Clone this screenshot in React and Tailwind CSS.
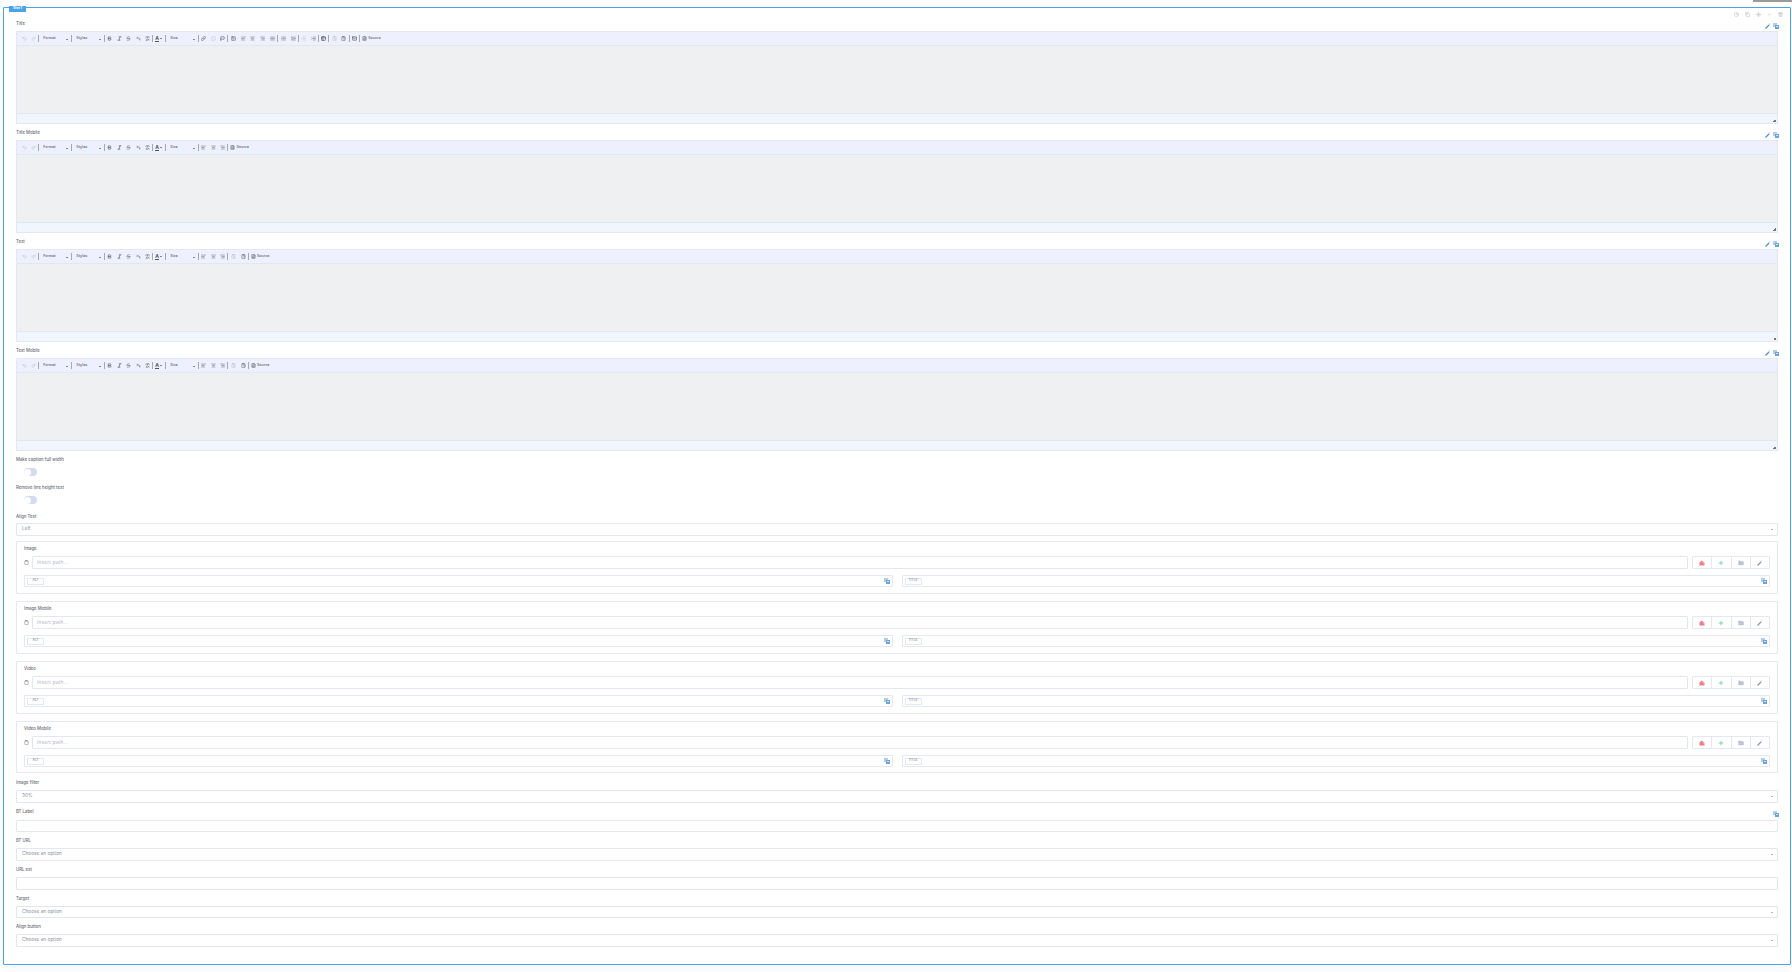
import React from 'react';
import {
  Undo2, Redo2, Bold, Italic, Strikethrough, Subscript, RemoveFormatting, Link, Unlink, Flag, Image,
  AlignLeft, AlignCenter, AlignRight, AlignJustify, List, ListOrdered, Outdent, Indent, Table2,
  ClipboardCopy, ClipboardPaste, Mail, FileText, Clipboard, Plus, Folder,
  Clock, Copy, Move, ChevronUp, Trash2,
} from 'lucide-react';

const Sep = () => <span className="w-px h-[7px] bg-[#a3a8b4] shrink-0" />;

const Btn = ({ icon: Icon, faded, heavy, wide }) => (
  <span className={`h-full flex items-center justify-center shrink-0 ${wide ? 'w-[9.8px]' : 'w-[9.4px]'}`}>
    <Icon size={5} strokeWidth={heavy ? 3.2 : 2.4} className={faded ? 'text-[#bcc0ca]' : 'text-[#5a5f6b]'} />
  </span>
);

const Combo = ({ label }) => (
  <span className="w-[32px] h-full flex items-start justify-between pl-[4px] pr-[3px] pt-[4px] shrink-0 text-[3.6px] leading-[5px] text-[#80848f] font-bold">
    {label}
    <span className="w-[2px] h-px bg-[#888] mt-[3px]" />
  </span>
);

const Source = () => (
  <span className="flex items-center h-full shrink-0 pl-[2px] gap-[1px] text-[3.6px] text-[#80848f] font-bold">
    <FileText size={5} strokeWidth={2.6} className="text-[#5a5f6b]" />
    Source
  </span>
);

const BaseTools = () => (
  <>
    <Btn icon={Undo2} faded />
    <Btn icon={Redo2} faded />
    <Sep />
    <Combo label="Format" />
    <Sep />
    <Combo label="Styles" />
    <Sep />
    <Btn icon={Bold} heavy />
    <Btn icon={Italic} heavy />
    <Btn icon={Strikethrough} />
    <Btn icon={Subscript} />
    <Btn icon={RemoveFormatting} />
    <Sep />
    <span className="w-[12px] h-full flex items-center pl-[2px] gap-[1px] shrink-0">
      <span className="text-[5px] leading-[5px] font-bold text-[#555] border-b border-[#555]">A</span>
      <span className="w-[2px] h-px bg-[#888]" />
    </span>
    <Sep />
    <Combo label="Size" />
    <Sep />
  </>
);

const Align = () => (
  <>
    <Btn icon={AlignLeft} />
    <Btn icon={AlignCenter} />
    <Btn icon={AlignRight} />
  </>
);

const FullTools = () => (
  <>
    <BaseTools />
    <Btn icon={Link} heavy />
    <Btn icon={Unlink} faded />
    <Btn icon={Flag} heavy />
    <Sep />
    <Btn icon={Image} wide />
    <Btn icon={AlignLeft} wide />
    <Btn icon={AlignCenter} wide />
    <Btn icon={AlignRight} wide />
    <Btn icon={AlignJustify} wide />
    <Sep />
    <Btn icon={List} wide />
    <Btn icon={ListOrdered} wide />
    <Sep />
    <Btn icon={Outdent} faded />
    <Btn icon={Indent} />
    <Sep />
    <Btn icon={Table2} heavy />
    <Sep />
    <Btn icon={ClipboardCopy} faded wide />
    <Btn icon={ClipboardPaste} wide />
    <Sep />
    <Btn icon={Mail} heavy />
    <Sep />
    <Source />
  </>
);

const MobileTools = () => (
  <>
    <BaseTools />
    <Align />
    <Sep />
    <Source />
  </>
);

const TextTools = () => (
  <>
    <BaseTools />
    <Align />
    <Sep />
    <Btn icon={ClipboardCopy} faded wide />
    <Btn icon={ClipboardPaste} wide />
    <Sep />
    <Source />
  </>
);

// small two-square translate badge, same one on every input
const Translate = () => (
  <svg width="6" height="6" viewBox="0 0 6 6" className="shrink-0">
    <rect x="0" y="0" width="4" height="4" fill="#b3cde9" />
    <rect x="2" y="2" width="4" height="4" fill="#6aa4db" />
    <rect x="3" y="3" width="2" height="1" fill="#d7e7f7" />
  </svg>
);

// the magic wand is just a slanted stroke with a spark at this size
const Wand = ({ color, spark }) => (
  <svg width="6" height="6" viewBox="0 0 6 6" className="shrink-0">
    <path d="M0.5 5.5 L4 2" stroke={color} strokeWidth="1.1" fill="none" />
    <path d="M4.4 0.4 V1.8 M3.7 1.1 H5.1" stroke={spark} strokeWidth="0.6" fill="none" />
  </svg>
);

const Label = ({ children, className = 'h-[16px] pt-[2px]' }) => (
  <div className={`flex items-center text-[4.3px] font-medium text-[#6a6d76] ${className}`}>{children}</div>
);

const Editor = ({ label, tools }) => (
  <div>
    <div className="h-[16px] flex justify-between">
      <Label>{label}</Label>
      <div className="flex items-end gap-[2px] pb-[2px] -mr-[1px]">
        <Wand color="#4a86c4" spark="#9fc3e6" />
        <Translate />
      </div>
    </div>
    <div className="h-[93px] flex flex-col border border-[#e3e7f3]">
      <div className="h-[14px] flex items-center pl-[2.5px] bg-[#eef1fd] border-b border-[#e3e7f3]">{tools}</div>
      <div className="flex-1 bg-[#eff0f2]" />
      <div className="h-[10px] flex items-end justify-end p-[1px] bg-[#f1f5fd] border-t border-[#e3e7f3]">
        <span className="w-[3px] h-[3px] bg-[linear-gradient(135deg,transparent_50%,#777_50%)]" />
      </div>
    </div>
  </div>
);

const Toggle = () => (
  <div className="ml-[8px] w-[13px] h-[8px] rounded-full bg-[#d5daee] flex items-center">
    <span className="w-[7px] h-[7px] rounded-full bg-white" />
  </div>
);

const Select = ({ value, h = 'h-[13px]' }) => (
  <div className={`${h} flex items-center justify-between pl-[5px] pr-[4px] border border-[#e2e6f3] rounded-[1px] text-[4.6px] tracking-[0.1px] text-[#858a97]`}>
    {value}
    <span className="w-[2px] h-px bg-[#b5b5b5]" />
  </div>
);

const Input = ({ h = 'h-[13px]' }) => <div className={`${h} border border-[#e2e6f3] rounded-[1px]`} />;

const TagInput = ({ tag }) => (
  <div className="flex-1 h-[12px] flex items-center justify-between pl-[2px] pr-[2px] border border-[#e4e8f4] rounded-[1px]">
    <span className="w-[17px] h-[7px] flex items-center justify-center border border-[#e4e8f4] text-[3.4px] text-[#777c8a]">{tag}</span>
    <Translate />
  </div>
);

const ImgBtn = ({ children, last }) => (
  <span className={`flex-1 flex items-center justify-center ${last ? '' : 'border-r border-[#e4e8f4]'}`}>{children}</span>
);

const MediaPicker = ({ label, h = 'h-[53px]' }) => (
  <div className={`${h} border border-[#e4e8f4] rounded-[1px] px-[7px]`}>
    <Label className="h-[14px] pt-[1px]">{label}</Label>
    <div className="h-[13px] flex items-center">
      <span className="w-[8px] shrink-0">
        <Clipboard size={5} strokeWidth={2.4} className="text-[#777]" />
      </span>
      <div className="flex-1 h-full flex items-center pl-[4px] pt-[1px] border border-[#e2e6f3] rounded-[1px] text-[4.6px] tracking-[0.3px] text-[#adb3c8]">
        Insert path...
      </div>
      <div className="w-[78px] h-full ml-[4px] flex border border-[#e4e8f4] rounded-[1px]">
        <ImgBtn>
          <svg width="6" height="6" viewBox="0 0 6 6">
            <path d="M2.8 0.5 L5.5 3 V5.5 H0.5 V2.6 Z" fill="#ee7b8a" />
            <path d="M3.6 2.4 L5 3.8" stroke="#fff" strokeWidth="0.5" />
          </svg>
        </ImgBtn>
        <ImgBtn><Plus size={6} strokeWidth={4} className="text-[#82d3b2]" /></ImgBtn>
        <ImgBtn><Folder size={6} fill="#bcc2d2" strokeWidth={1.5} className="text-[#bcc2d2]" /></ImgBtn>
        <ImgBtn last><Wand color="#8890a8" spark="#c3c8d6" /></ImgBtn>
      </div>
    </div>
    <div className="flex gap-[9px] mt-[6px]">
      <TagInput tag="ALT" />
      <TagInput tag="TITLE" />
    </div>
  </div>
);

export default function App() {
  return (
    <div className="w-full h-[972px] bg-white overflow-hidden pt-[7px] px-[3px] font-['Inter',sans-serif] relative">
      <div className="absolute top-0 right-0 w-[39px] h-[2px] bg-[#9a9a9a]" />
      <div className="relative w-[1788px] border border-[#4da3e8] rounded-[1px] pt-[7px] px-[12px] pb-[17px] shadow-[0_4px_10px_rgba(80,110,220,0.06)]">
        <span className="absolute -top-[2px] left-[5px] w-[17px] h-[6px] flex items-center justify-center bg-[#4da3e8] text-[3.6px] font-bold text-white">
          Slot 1
        </span>
        <div className="absolute top-[4px] right-[7px] flex gap-[6px] text-[#b4b8c0]">
          <Clock size={5} strokeWidth={2.4} />
          <Copy size={5} strokeWidth={2.4} />
          <Move size={5} strokeWidth={2.4} />
          <ChevronUp size={5} strokeWidth={2.4} />
          <Trash2 size={5} strokeWidth={2.4} />
        </div>

        <Editor label="Title" tools={<FullTools />} />
        <Editor label="Title Mobile" tools={<MobileTools />} />
        <Editor label="Text" tools={<TextTools />} />
        <Editor label="Text Mobile" tools={<TextTools />} />

        <Label className="h-[17px] pt-[2px]">Make caption full width</Label>
        <Toggle />
        <Label className="h-[17px] mt-[3px] pt-[2px]">Remove line height text</Label>
        <Toggle />
        <Label className="h-[14px] mt-[5px] pt-[2px]">Align Text</Label>
        <Select value="Left" />

        <div className="flex flex-col gap-[7px] mt-[5px]">
          <MediaPicker label="Image" />
          <MediaPicker label="Image Mobile" />
          <MediaPicker label="Video" />
          <MediaPicker label="Video Mobile" h="h-[52px]" />
        </div>

        <Label className="h-[17px] pt-[4px]">Image filter</Label>
        <Select value="30%" />
        <div className="h-[17px] flex justify-between">
          <Label className="h-[17px] pt-[2px]">BT Label</Label>
          <div className="pt-[8px] -mr-[1px]"><Translate /></div>
        </div>
        <Input h="h-[12px]" />
        <Label>BT URL</Label>
        <Select value="Choose an option" />
        <Label>URL est</Label>
        <Input />
        <Label>Target</Label>
        <Select value="Choose an option" h="h-[12px]" />
        <Label>Align button</Label>
        <Select value="Choose an option" />
      </div>
    </div>
  );
}
